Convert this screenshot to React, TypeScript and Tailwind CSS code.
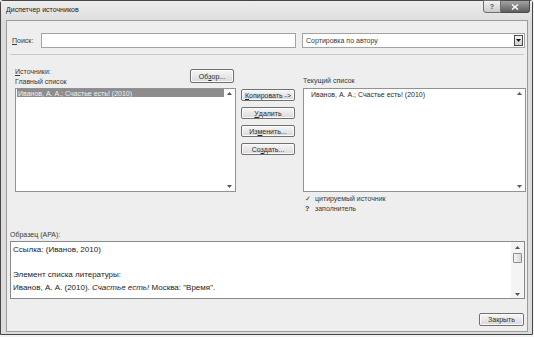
import React from "react";

const ui = "font-['Liberation_Sans',Arial,sans-serif]";

function Btn({ children, className = "" }: { children: React.ReactNode; className?: string }) {
  return (
    <div
      className={
        "flex items-center justify-center rounded-[2px] border border-[#707070] bg-linear-to-b from-[#f7f7f7] to-[#d9d9d9] text-[7px] leading-none text-[#2a2a2a] shadow-[inset_0_0_0_1px_#fbfbfb] " +
        className
      }
    >
      {children}
    </div>
  );
}

function Up() {
  return (
    <svg width="5" height="3" viewBox="0 0 5 3">
      <path d="M0 3 L2.5 0 L5 3 Z" fill="#555" />
    </svg>
  );
}

function Down() {
  return (
    <svg width="5" height="3" viewBox="0 0 5 3">
      <path d="M0 0 L5 0 L2.5 3 Z" fill="#555" />
    </svg>
  );
}

function ListBox({ children, className = "" }: { children?: React.ReactNode; className?: string }) {
  return (
    <div className={"flex h-[104px] border border-[#929292] bg-white " + className}>
      <div className="flex-1">{children}</div>
      <div className="flex w-[12px] flex-col items-center justify-between pb-[3px] pt-[3px]">
        <Up />
        <Down />
      </div>
    </div>
  );
}

function TitleBar() {
  return (
    <div className="flex h-[19px] items-start bg-linear-to-b from-[#ededed] to-[#dedede]">
      <div className="flex h-[19px] items-center pl-[5px] text-[7px] text-[#222]">Диспетчер источников</div>
      <div className="ml-auto mr-[2px] -mt-[1px] flex">
        <div className="flex h-[13px] w-[18px] items-center justify-center rounded-bl-[3px] border border-[#6e6e6e] bg-linear-to-b from-[#f2f2f2] to-[#c9c9c9] text-[7px] font-bold leading-none text-[#555]">
          ?
        </div>
        <div className="flex h-[13px] w-[29px] items-center justify-center rounded-br-[3px] border border-l-0 border-[#4a4a4a] bg-linear-to-b from-[#a4a4a4] to-[#5e5e5e]">
          <svg width="8" height="6" viewBox="0 0 8 6">
            <path d="M1 0.5 L7 5.5 M7 0.5 L1 5.5" stroke="#f4f4f4" strokeWidth="1.6" />
          </svg>
        </div>
      </div>
    </div>
  );
}

export default function App() {
  return (
    <div className={"h-[337px] w-[534px] overflow-hidden bg-[#f3f3f3] " + ui}>
      <div className="flex h-[335px] w-[533px] flex-col rounded-t-[3px] border border-[#464646] bg-[#dcdcdc]">
        <TitleBar />
        <div className="mb-[2px] ml-[5px] mr-[4px] flex flex-1 flex-col border border-[#9c9c9c] bg-[#eeeeee] text-[7px] leading-[10px] text-[#383838]">
          {/* search row */}
          <div className="mt-[12px] flex h-[15px] items-center pl-[5px]">
            <div className="w-[29px]">
              <span className="underline">П</span>оиск:
            </div>
            <div className="h-[15px] w-[255px] border border-[#a3a3a3] bg-white" />
            <div className="ml-[6px] flex h-[15px] w-[223px] items-center border border-[#a3a3a3] bg-white pl-[3px]">
              <span className="flex-1">Сортировка по автору</span>
              <div className="mr-[1px] flex h-[11px] w-[9px] items-center justify-center border border-[#4a4a4a] bg-linear-to-b from-[#f4f4f4] to-[#d0d0d0]">
                <svg width="5" height="3" viewBox="0 0 5 3">
                  <path d="M0 0 L5 0 L2.5 3 Z" fill="#111" />
                </svg>
              </div>
            </div>
          </div>

          <div className="mx-[3px] mt-[6px] h-px bg-[#c9c9c9]" />

          {/* lists */}
          <div className="flex">
            <div className="ml-[8px] w-[221px]">
              <div className="flex h-[33px] justify-between">
                <div className="pt-[12px]">
                  <div>
                    <span className="underline">И</span>сточники:
                  </div>
                  <div>Главный список</div>
                </div>
                <Btn className="mr-[2px] mt-[14px] h-[14px] w-[44px]">
                  Об<span className="underline">з</span>ор...
                </Btn>
              </div>
              <ListBox>
                <div className="ml-px mr-[-1px] flex h-[8px] items-center bg-[#8d8d8d] pl-[1px] leading-none text-[#f2f2f2]">
                  Иванов, А. А.; Счастье есть! (2010)
                </div>
              </ListBox>
            </div>

            <div className="ml-[5px] flex w-[54px] flex-col gap-[6px] pt-[34px]">
              <Btn className="h-[12px]">
                <span className="underline">К</span>опировать -&gt;
              </Btn>
              <Btn className="h-[12px]">
                <span className="underline">У</span>далить
              </Btn>
              <Btn className="h-[12px]">
                Из<span className="underline">м</span>енить...
              </Btn>
              <Btn className="h-[12px]">
                Со<span className="underline">з</span>дать...
              </Btn>
            </div>

            <div className="ml-[8px] w-[223px]">
              <div className="h-[33px] pt-[21px]">Текущий список</div>
              <ListBox>
                <div className="pl-[7px] pt-[2px] leading-[8px] text-[#2a2a2a]">Иванов, А. А.; Счастье есть! (2010)</div>
              </ListBox>
              <div className="mt-[2px] pl-[2px]">
                <div className="flex">
                  <span className="w-[10px] font-['DejaVu_Sans',sans-serif] font-bold">✓</span>
                  <span>цитируемый источник</span>
                </div>
                <div className="flex">
                  <span className="w-[10px] font-bold">?</span>
                  <span>заполнитель</span>
                </div>
              </div>
            </div>
          </div>

          {/* preview */}
          <div className="ml-[3px] mt-[16px]">Образец (APA):</div>
          <div className="ml-[3px] mr-[2px] mt-[1px] flex h-[58px] border border-[#8a8a8a] bg-white">
            <div className="flex-1 pl-[2px] pt-[2px] text-[8px] leading-[12.5px] text-[#222]">
              <div>Ссылка: (Иванов, 2010)</div>
              <div>&nbsp;</div>
              <div>Элемент списка литературы:</div>
              <div>
                Иванов, А. А. (2010). <i>Счастье есть!</i> Москва: "Время".
              </div>
            </div>
            <div className="flex w-[13px] flex-col items-center bg-[#f4f4f4]">
              <div className="flex h-[11px] items-center">
                <Up />
              </div>
              <div className="h-[10px] w-[9px] rounded-[1px] border border-[#8c8c8c] bg-linear-to-r from-[#f4f4f4] to-[#d8d8d8]" />
              <div className="flex-1" />
              <div className="flex h-[8px] items-center">
                <Down />
              </div>
            </div>
          </div>

          <div className="mr-[3px] mt-[14px] flex justify-end">
            <Btn className="h-[13px] w-[45px]">Закрыть</Btn>
          </div>
        </div>
      </div>
    </div>
  );
}
